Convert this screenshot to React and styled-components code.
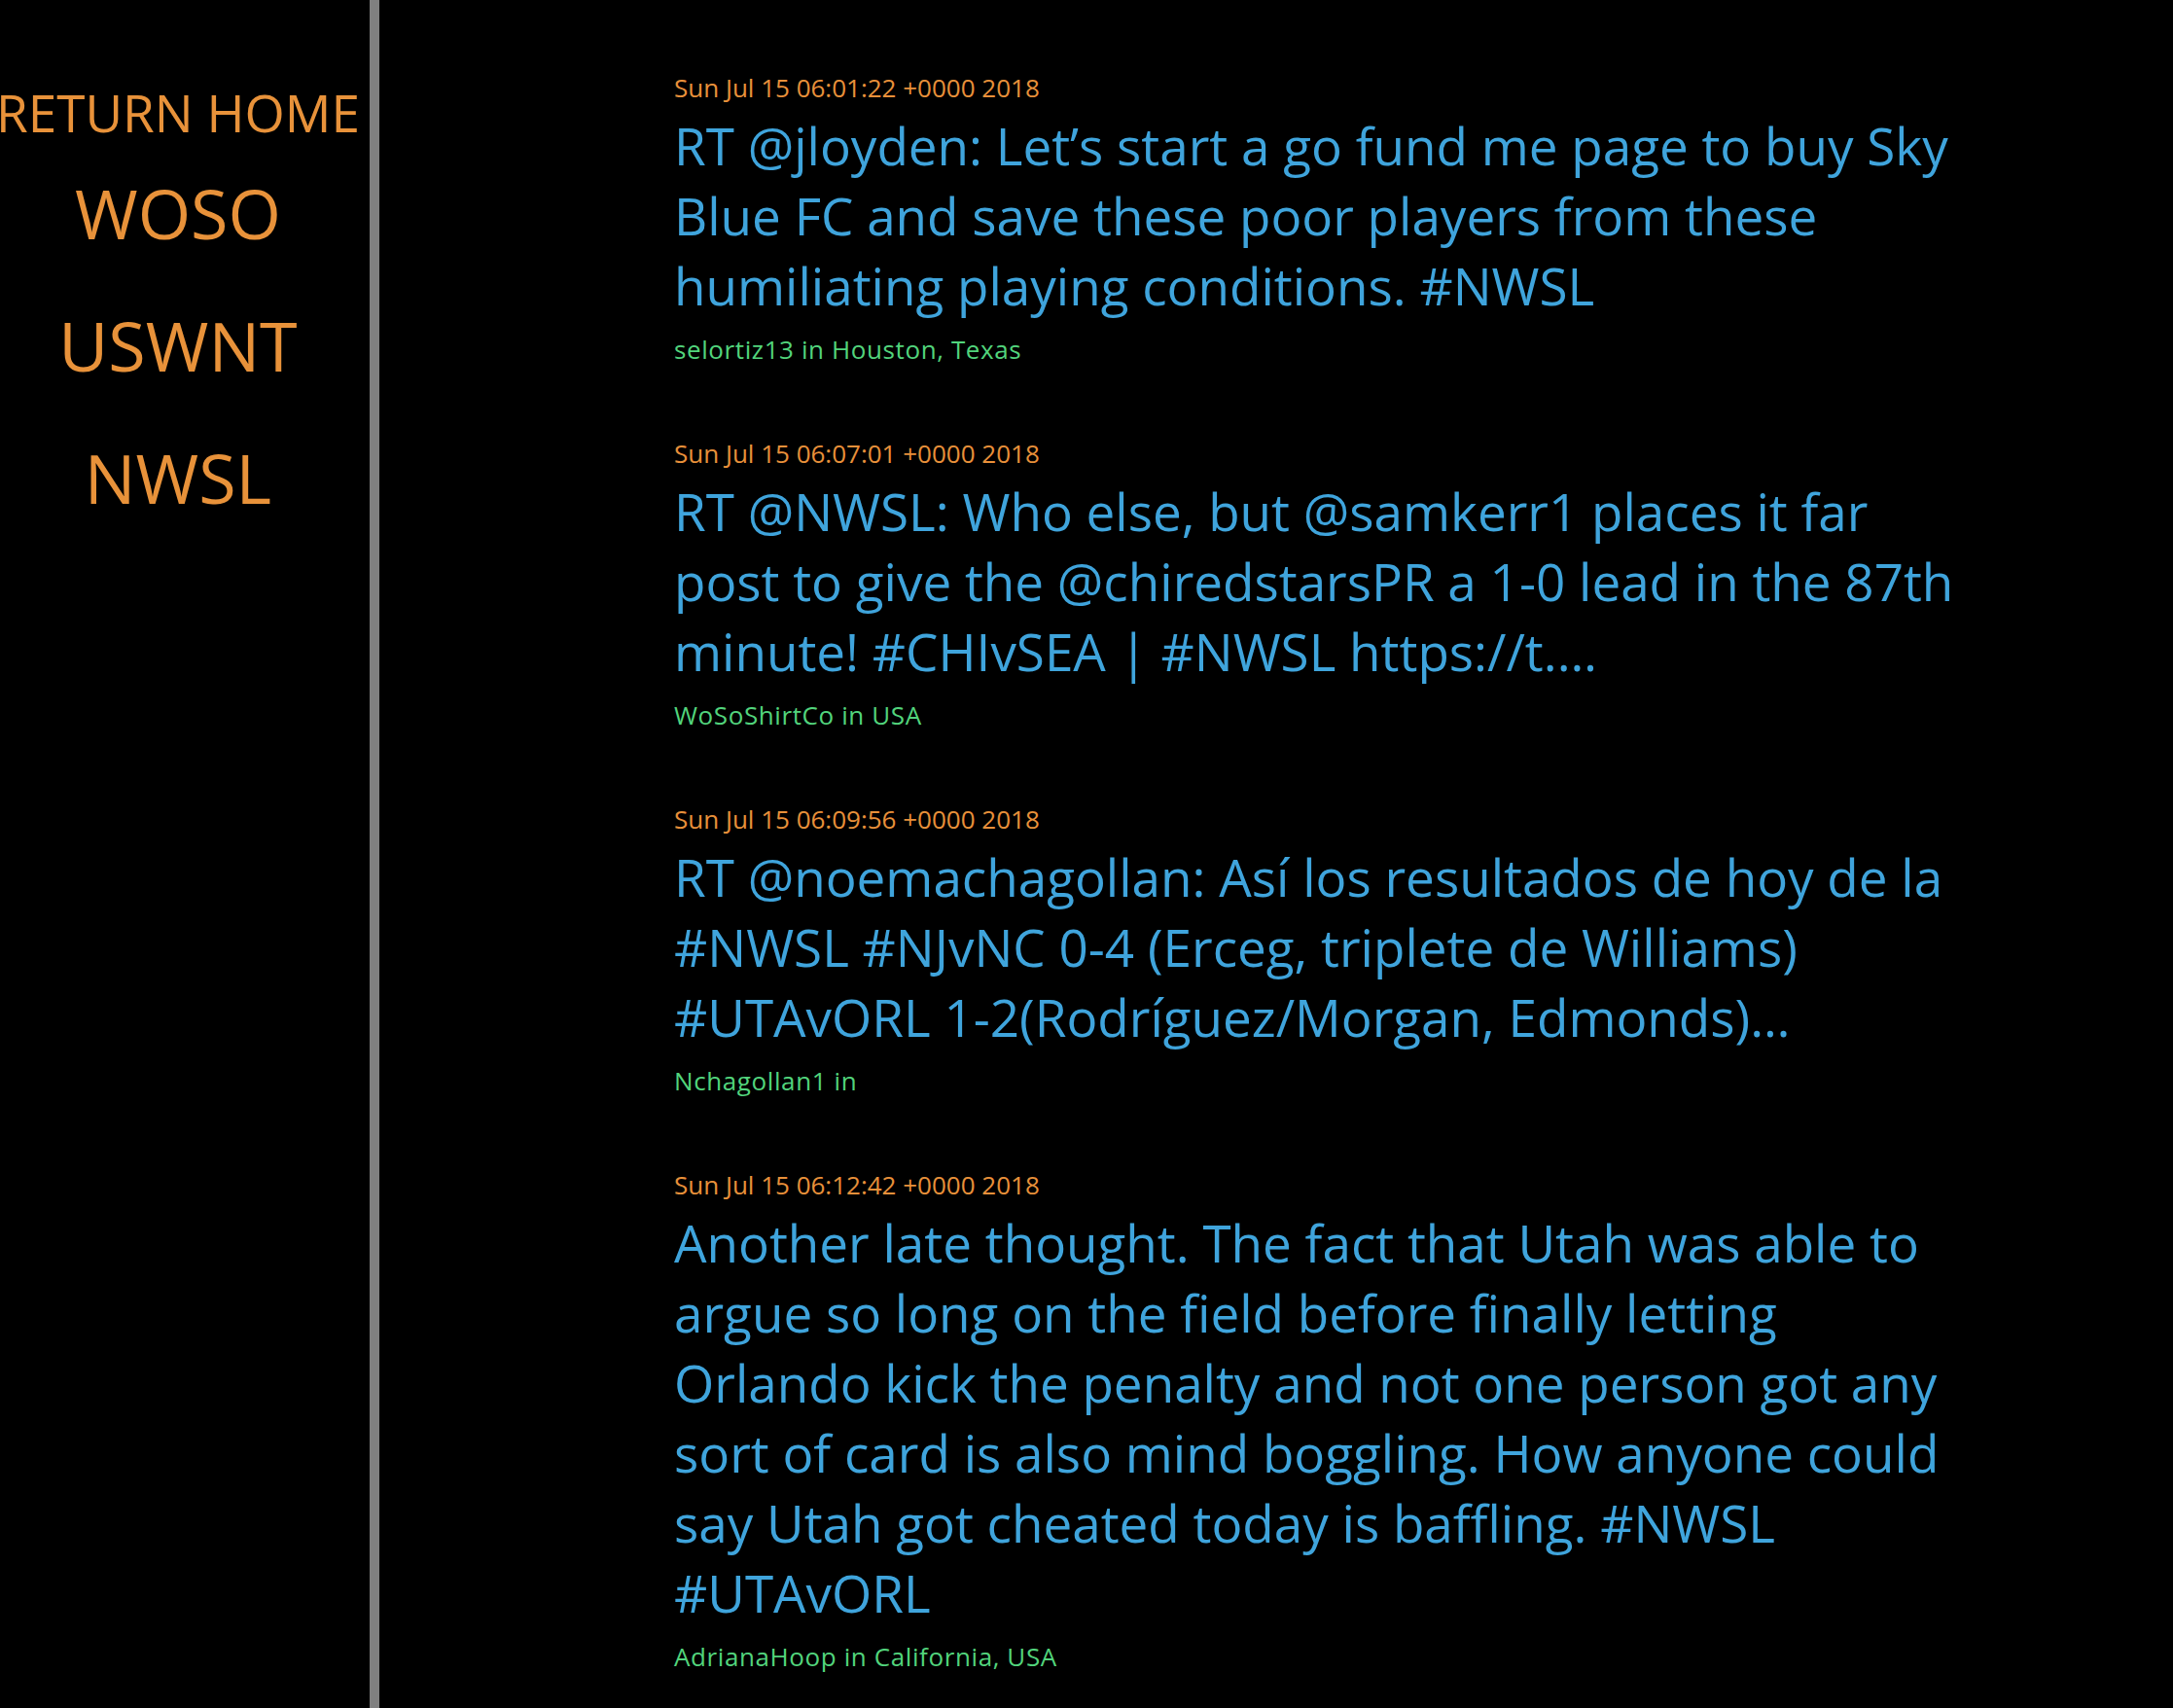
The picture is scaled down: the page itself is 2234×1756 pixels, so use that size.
import React from 'react';
import styled, { createGlobalStyle } from 'styled-components';

const GlobalStyle = createGlobalStyle`
  html, body {
    margin: 0;
    padding: 0;
    background-color: #000;
  }
  body {
    font-family: "Open Sans", "Noto Sans", sans-serif;
  }
`;

const Page = styled.div`
  display: flex;
  min-height: 100vh;
  background-color: #000;
`;

const Sidebar = styled.nav`
  width: 366px;
  padding: 89px 14px 0 0;
  border-right: 10px solid #808080;
  display: flex;
  flex-direction: column;
  align-items: center;
  flex-shrink: 0;
`;

const HomeLink = styled.a`
  font-size: 53px;
  line-height: 53px;
  color: #e8923a;
  text-decoration: none;
  white-space: nowrap;
  margin-bottom: 42px;
`;

const NavList = styled.div`
  display: flex;
  flex-direction: column;
  align-items: center;
  gap: 66px;
`;

const NavLink = styled.a`
  font-size: 70px;
  line-height: 70px;
  color: #e8923a;
  text-decoration: none;
`;

const Feed = styled.main`
  flex: 1;
  padding: 74px 0 40px 303px;
`;

const Tweet = styled.article`
  width: 1342px;
  margin-bottom: 75px;
`;

const TweetDate = styled.div`
  font-size: 26px;
  line-height: 32px;
  color: #e8903a;
  margin-bottom: 8px;
`;

const TweetText = styled.p`
  margin: 0 0 13px;
  font-size: 53px;
  line-height: 72px;
  color: #3fa4dc;
`;

const TweetPlace = styled.div`
  font-size: 26px;
  line-height: 32px;
  letter-spacing: 0.6px;
  color: #52d47c;
`;

const tweets = [
  {
    date: 'Sun Jul 15 06:01:22 +0000 2018',
    text: 'RT @jloyden: Let’s start a go fund me page to buy Sky Blue FC and save these poor players from these humiliating playing conditions. #NWSL',
    user: 'selortiz13',
    place: 'Houston, Texas',
  },
  {
    date: 'Sun Jul 15 06:07:01 +0000 2018',
    text: 'RT @NWSL: Who else, but @samkerr1 places it far post to give the @chiredstarsPR a 1-0 lead in the 87th minute! #CHIvSEA | #NWSL https://t.…',
    user: 'WoSoShirtCo',
    place: 'USA',
  },
  {
    date: 'Sun Jul 15 06:09:56 +0000 2018',
    text: 'RT @noemachagollan: Así los resultados de hoy de la #NWSL #NJvNC 0-4 (Erceg, triplete de Williams) #UTAvORL 1-2(Rodríguez/Morgan, Edmonds)…',
    user: 'Nchagollan1',
    place: '',
  },
  {
    date: 'Sun Jul 15 06:12:42 +0000 2018',
    text: 'Another late thought. The fact that Utah was able to argue so long on the field before finally letting Orlando kick the penalty and not one person got any sort of card is also mind boggling. How anyone could say Utah got cheated today is baffling. #NWSL #UTAvORL',
    user: 'AdrianaHoop',
    place: 'California, USA',
  },
];

const App = () => {
  return (
    <Page>
      <GlobalStyle />
      <Sidebar>
        <HomeLink href="#">RETURN HOME</HomeLink>
        <NavList>
          <NavLink href="#">WOSO</NavLink>
          <NavLink href="#">USWNT</NavLink>
          <NavLink href="#">NWSL</NavLink>
        </NavList>
      </Sidebar>
      <Feed>
        {tweets.map((tweet, index) => (
          <Tweet key={index}>
            <TweetDate>{tweet.date}</TweetDate>
            <TweetText>{tweet.text}</TweetText>
            <TweetPlace>{tweet.user} in {tweet.place}</TweetPlace>
          </Tweet>
        ))}
      </Feed>
    </Page>
  );
};

export default App;
